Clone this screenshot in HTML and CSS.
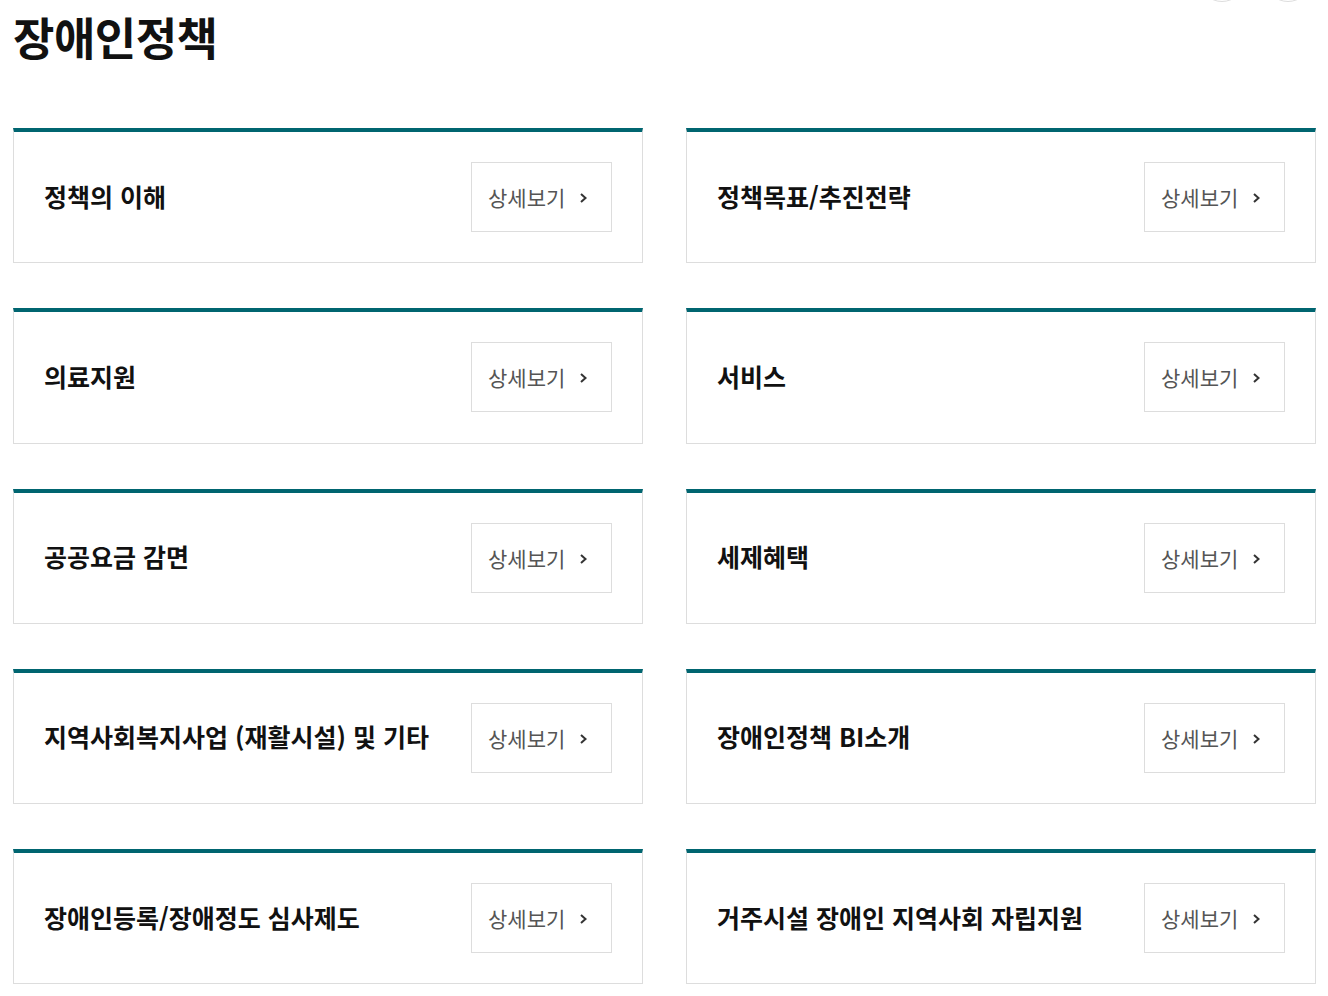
FILE: index.html
```html
<!DOCTYPE html>
<html lang="ko">
<head>
<meta charset="utf-8">
<link rel="stylesheet" href="styles.css">
</head>
<body>
<div class="page">
  <div class="top-circles">
    <span class="circle c1"></span>
    <span class="circle c2"></span>
  </div>
  <h1 class="page-title">장애인정책</h1>
  <div class="grid">
    <div class="card"><h2 class="card-title">정책의 이해</h2><a class="more" href="#">상세보기<svg class="chev" viewBox="0 0 7 10" width="7" height="10"><path d="M1 1 L5.5 5 L1 9" fill="none" stroke="#333" stroke-width="2"/></svg></a></div>
    <div class="card"><h2 class="card-title">정책목표/추진전략</h2><a class="more" href="#">상세보기<svg class="chev" viewBox="0 0 7 10" width="7" height="10"><path d="M1 1 L5.5 5 L1 9" fill="none" stroke="#333" stroke-width="2"/></svg></a></div>
    <div class="card"><h2 class="card-title">의료지원</h2><a class="more" href="#">상세보기<svg class="chev" viewBox="0 0 7 10" width="7" height="10"><path d="M1 1 L5.5 5 L1 9" fill="none" stroke="#333" stroke-width="2"/></svg></a></div>
    <div class="card"><h2 class="card-title">서비스</h2><a class="more" href="#">상세보기<svg class="chev" viewBox="0 0 7 10" width="7" height="10"><path d="M1 1 L5.5 5 L1 9" fill="none" stroke="#333" stroke-width="2"/></svg></a></div>
    <div class="card"><h2 class="card-title">공공요금 감면</h2><a class="more" href="#">상세보기<svg class="chev" viewBox="0 0 7 10" width="7" height="10"><path d="M1 1 L5.5 5 L1 9" fill="none" stroke="#333" stroke-width="2"/></svg></a></div>
    <div class="card"><h2 class="card-title">세제혜택</h2><a class="more" href="#">상세보기<svg class="chev" viewBox="0 0 7 10" width="7" height="10"><path d="M1 1 L5.5 5 L1 9" fill="none" stroke="#333" stroke-width="2"/></svg></a></div>
    <div class="card"><h2 class="card-title">지역사회복지사업 (재활시설) 및 기타</h2><a class="more" href="#">상세보기<svg class="chev" viewBox="0 0 7 10" width="7" height="10"><path d="M1 1 L5.5 5 L1 9" fill="none" stroke="#333" stroke-width="2"/></svg></a></div>
    <div class="card"><h2 class="card-title">장애인정책 BI소개</h2><a class="more" href="#">상세보기<svg class="chev" viewBox="0 0 7 10" width="7" height="10"><path d="M1 1 L5.5 5 L1 9" fill="none" stroke="#333" stroke-width="2"/></svg></a></div>
    <div class="card"><h2 class="card-title">장애인등록/장애정도 심사제도</h2><a class="more" href="#">상세보기<svg class="chev" viewBox="0 0 7 10" width="7" height="10"><path d="M1 1 L5.5 5 L1 9" fill="none" stroke="#333" stroke-width="2"/></svg></a></div>
    <div class="card"><h2 class="card-title">거주시설 장애인 지역사회 자립지원</h2><a class="more" href="#">상세보기<svg class="chev" viewBox="0 0 7 10" width="7" height="10"><path d="M1 1 L5.5 5 L1 9" fill="none" stroke="#333" stroke-width="2"/></svg></a></div>
  </div>
</div>
</body>
</html>
```
FILE: styles.css
```css
* { box-sizing: border-box; }
html, body { margin: 0; padding: 0; background: #fff; }
body {
  font-family: "Noto Sans CJK KR", "Noto Sans", sans-serif;
  color: #111;
  overflow: hidden;
}
.page {
  position: relative;
  padding: 0 12px 0 13px;
}
.top-circles { position: absolute; top: -44px; left: 1199px; display: flex; gap: 20px; }
.circle {
  display: block;
  width: 46px;
  height: 46px;
  border: 1px solid #ddd;
  border-radius: 50%;
}
.page-title {
  margin: 0;
  padding-top: 7px;
  height: 128px;
  font-size: 45px;
  line-height: 60px;
  font-weight: 700;
  letter-spacing: -0.5px;
  color: #111;
}
.grid {
  display: grid;
  grid-template-columns: 630px 630px;
  column-gap: 43px;
  row-gap: 45px;
}
.card {
  display: flex;
  align-items: center;
  justify-content: space-between;
  border: 1px solid #ddd;
  border-top: 4px solid #006570;
  padding: 30px;
  height: 135.25px;
}
.card-title {
  margin: 0 0 3px 0;
  font-size: 25px;
  font-weight: 700;
  color: #111;
}
.more {
  display: flex;
  align-items: center;
  width: 141px;
  height: 70px;
  padding-left: 16px;
  border: 1px solid #ddd;
  color: #555;
  font-size: 21px;
  font-weight: 400;
  text-decoration: none;
}
.chev { margin-left: 15px; margin-top: 2px; }
```
